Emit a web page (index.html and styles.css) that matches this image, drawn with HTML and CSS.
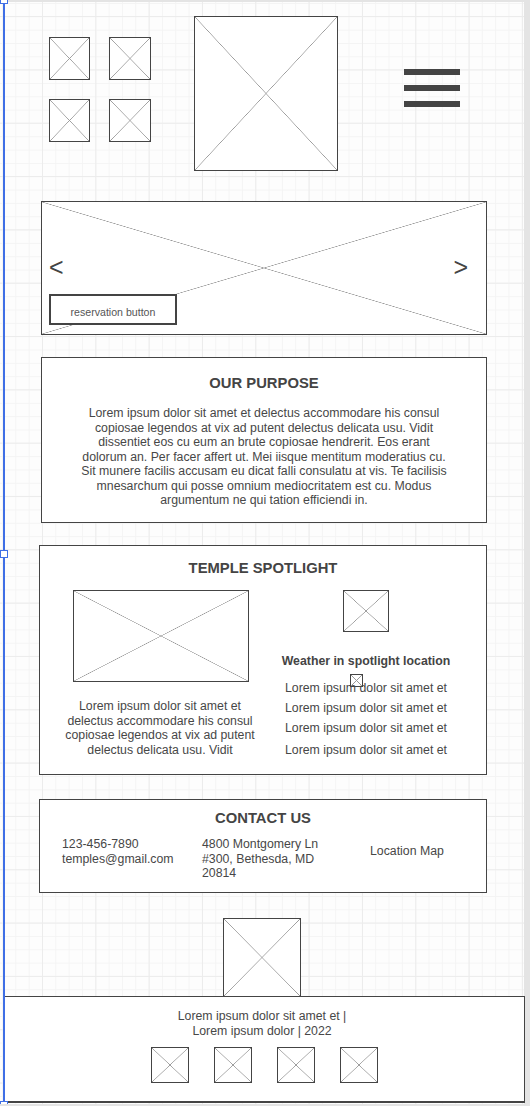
FILE: index.html
```html
<!DOCTYPE html>
<html>
<head>
<title>Temples Wireframe</title>
<link rel="stylesheet" href="styles.css">
</head>
<body>

<div class="canvas">
  <!-- selected connector on the left edge -->
  <div class="sel-line">
    <span class="handle h-top"></span>
    <span class="handle h-mid"></span>
    <span class="handle h-bot"></span>
  </div>

  <header class="top">
    <div class="icon-grid">
      <div class="ph"></div>
      <div class="ph"></div>
      <div class="ph"></div>
      <div class="ph"></div>
    </div>
    <div class="ph logo"></div>
    <div class="menu"><span></span><span></span><span></span></div>
  </header>

  <section class="ph hero">
    <div class="arrows"><span>&lt;</span><span>&gt;</span></div>
    <button class="reserve" type="button">reservation button</button>
  </section>

  <section class="box purpose">
    <h2>OUR PURPOSE</h2>
    <p>Lorem ipsum dolor sit amet et delectus accommodare his consul<br>
    copiosae legendos at vix ad putent delectus delicata usu. Vidit<br>
    dissentiet eos cu eum an brute copiosae hendrerit. Eos erant<br>
    dolorum an. Per facer affert ut. Mei iisque mentitum moderatius cu.<br>
    Sit munere facilis accusam eu dicat falli consulatu at vis. Te facilisis<br>
    mnesarchum qui posse omnium mediocritatem est cu. Modus<br>
    argumentum ne qui tation efficiendi in.</p>
  </section>

  <section class="box spotlight">
    <h2>TEMPLE SPOTLIGHT</h2>
    <div class="spot-cols">
      <div class="spot-left">
        <div class="ph spot-img"></div>
        <p>Lorem ipsum dolor sit amet et<br>
        delectus accommodare his consul<br>
        copiosae legendos at vix ad putent<br>
        delectus delicata usu. Vidit</p>
      </div>
      <div class="spot-right">
        <div class="ph weather-img"></div>
        <h3>Weather in spotlight location</h3>
        <div class="ph weather-icon"></div>
        <ul class="weather-list">
          <li>Lorem ipsum dolor sit amet et</li>
          <li>Lorem ipsum dolor sit amet et</li>
          <li>Lorem ipsum dolor sit amet et</li>
          <li class="last">Lorem ipsum dolor sit amet et</li>
        </ul>
      </div>
    </div>
  </section>

  <section class="box contact">
    <h2>CONTACT US</h2>
    <div class="contact-cols">
      <div>123-456-7890<br>temples@gmail.com</div>
      <div>4800 Montgomery Ln<br>#300, Bethesda, MD<br>20814</div>
      <div class="map">Location Map</div>
    </div>
  </section>

  <div class="ph footer-logo"></div>

  <footer class="box footer">
    <p>Lorem ipsum dolor sit amet et |<br>Lorem ipsum dolor | 2022</p>
    <div class="socials">
      <div class="ph"></div>
      <div class="ph"></div>
      <div class="ph"></div>
      <div class="ph"></div>
    </div>
  </footer>
</div>

</body>
</html>
```

FILE: styles.css
```css
* {
  box-sizing: border-box;
}
html {
  background-color: #e4e4e4;
}
body {
  margin: 0;
  font-family: "Liberation Sans", Arial, sans-serif;
  color: #474747;
}

/* drawing canvas with the editor grid */
.canvas {
  position: relative;
  width: 524px;
  height: 1102px;
  margin-top: 2px;
  background-color: #fdfdfd;
  background-image:
    linear-gradient(#ececec 1px, transparent 1px),
    linear-gradient(90deg, #ececec 1px, transparent 1px),
    linear-gradient(#f4f4f4 1px, transparent 1px),
    linear-gradient(90deg, #f4f4f4 1px, transparent 1px);
  background-size: 53.33px 53.33px, 53.33px 53.33px, 13.33px 13.33px, 13.33px 13.33px;
  background-position: 0 14px, 42px 0, 0 1px, 2px 0;
}

/* placeholder image: box with an X */
.ph {
  border: 1px solid #444;
  background:
    linear-gradient(to top right, transparent calc(50% - 0.6px), #999 50%, transparent calc(50% + 0.6px)),
    linear-gradient(to bottom right, transparent calc(50% - 0.6px), #999 50%, transparent calc(50% + 0.6px)),
    #fff;
}

.box {
  background: #fff;
  border: 1px solid #444;
}
.box h2 {
  margin: 0;
  font-size: 14.8px;
  line-height: 17px;
  font-weight: bold;
  text-align: center;
  color: #444;
}

/* header */
.top {
  display: flex;
  align-items: flex-start;
  padding: 14px 0 0 49px;
}
.icon-grid {
  display: grid;
  grid-template-columns: 41px 42px;
  grid-template-rows: 43px 43px;
  gap: 19px;
  margin-top: 21px;
}
.logo {
  width: 144px;
  height: 155px;
  margin-left: 43px;
}
.menu {
  display: flex;
  flex-direction: column;
  gap: 10px;
  margin: 53px 0 0 66px;
}
.menu span {
  display: block;
  width: 56px;
  height: 6px;
  background: #444;
}

/* hero slider */
.hero {
  display: flex;
  flex-direction: column;
  justify-content: flex-end;
  width: 446px;
  height: 134px;
  margin: 30px 0 0 41px;
  padding: 0 18px 9px 7px;
}
.arrows {
  display: flex;
  justify-content: space-between;
  font-size: 25px;
  line-height: 24px;
  color: #444;
  margin-bottom: 15px;
}
.reserve {
  width: 128px;
  height: 31px;
  border: 2px solid #444;
  background: #fff;
  font-family: "Liberation Sans", Arial, sans-serif;
  font-size: 10.6px;
  color: #555;
  padding: 4px 0 0;
}

/* purpose */
.purpose {
  width: 446px;
  height: 166px;
  margin: 22px 0 0 41px;
  padding-top: 17px;
}
.purpose p {
  margin: 14px 0 0;
  font-size: 12.3px;
  line-height: 14.5px;
  text-align: center;
}

/* spotlight */
.spotlight {
  width: 448px;
  height: 230px;
  margin: 22px 0 0 39px;
  padding-top: 14px;
}
.spot-cols {
  display: grid;
  grid-template-columns: 240px 170px;
  margin-top: 13px;
}
.spot-left,
.spot-right {
  display: flex;
  flex-direction: column;
  align-items: center;
  text-align: center;
}
.spot-right {
  position: relative;
  left: 1px;
}
.spot-img {
  width: 176px;
  height: 92px;
  margin-left: 2px;
}
.spot-left p {
  margin: 17px 0 0;
  font-size: 12.3px;
  line-height: 14.5px;
  white-space: nowrap;
}
.weather-img {
  width: 46px;
  height: 42px;
}
.spot-right h3 {
  margin: 22px 0 0;
  font-size: 12.3px;
  line-height: 15px;
  white-space: nowrap;
  color: #444;
}
.weather-icon {
  position: absolute;
  left: 69px;
  top: 84px;
  width: 13px;
  height: 13px;
  background-color: transparent;
}
.weather-list {
  list-style: none;
  margin: 9px 0 0;
  padding: 0;
  font-size: 12.3px;
  line-height: 20px;
  white-space: nowrap;
}
.weather-list .last {
  margin-top: 2px;
}

/* contact */
.contact {
  width: 448px;
  height: 94px;
  margin: 24px 0 0 39px;
  padding-top: 10px;
}
.contact-cols {
  display: grid;
  grid-template-columns: 140px 168px auto;
  margin-top: 10px;
  padding-left: 22px;
  font-size: 12.3px;
  line-height: 14.5px;
}
.contact-cols .map {
  margin-top: 7px;
}

/* footer */
.footer-logo {
  width: 78px;
  height: 79px;
  margin: 25px 0 0 223px;
}
.footer {
  width: 521px;
  height: 107px;
  margin: -1px 0 0 4px;
  border-bottom-width: 2px;
  padding-top: 12px;
}
.footer p {
  margin: 0;
  padding-right: 5px;
  font-size: 12.3px;
  line-height: 15px;
  text-align: center;
}
.socials {
  display: flex;
  justify-content: center;
  gap: 25px;
  margin-top: 8px;
}
.socials .ph {
  width: 38px;
  height: 36px;
}

/* selection overlay */
.sel-line {
  position: absolute;
  left: 3px;
  top: -2px;
  width: 2px;
  height: 1104px;
  background: #3f6fe6;
  z-index: 5;
}
.handle {
  position: absolute;
  left: -3px;
  width: 8px;
  height: 8px;
  background: #fff;
  border: 1px solid #3f6fe6;
}
.h-top {
  top: -4px;
}
.h-mid {
  top: 550px;
}
.h-bot {
  top: 1101px;
}
```
